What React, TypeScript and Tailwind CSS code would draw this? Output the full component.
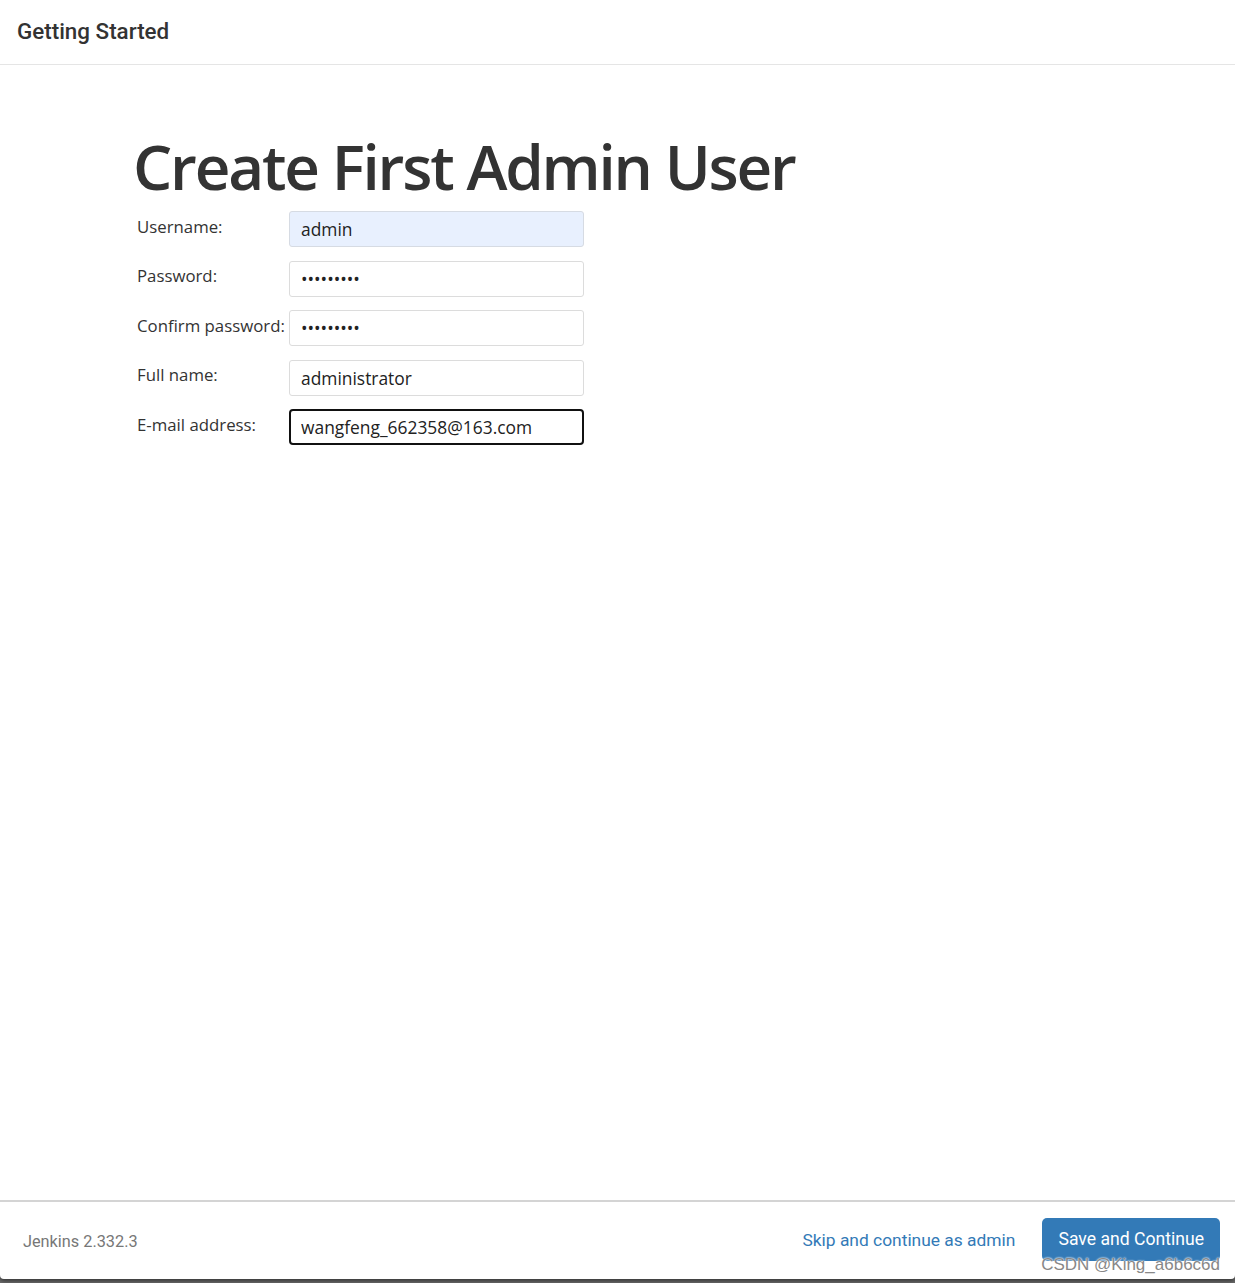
import { useState } from "react";

const fields = [
  { label: "Username:", name: "username", type: "text", value: "admin" },
  { label: "Password:", name: "password", type: "password", value: "123456789" },
  { label: "Confirm password:", name: "password2", type: "password", value: "123456789" },
  { label: "Full name:", name: "fullname", type: "text", value: "administrator" },
  { label: "E-mail address:", name: "email", type: "text", value: "wangfeng_662358@163.com" },
];

export default function App() {
  const [form, setForm] = useState<Record<string, string>>(
    Object.fromEntries(fields.map((f) => [f.name, f.value]))
  );

  return (
    <div className="w-[1235px] h-[1283px] bg-[#6b6b6b] overflow-hidden font-['Roboto',sans-serif]">
      <div className="h-[1279px] bg-white rounded-b-[4px] flex flex-col shadow-[0_2px_4px_rgba(0,0,0,0.5)]">
        {/* header */}
        <div className="h-[65px] border-b border-[#e5e5e5] px-[17px] flex items-center">
          <h4 className="text-[22.4px] font-medium text-[#333] leading-none pb-[1px]">Getting Started</h4>
        </div>

        {/* body */}
        <div className="flex-1 pl-[135px] pt-[70px] font-['Open_Sans',sans-serif]">
          <h1 className="text-[62px] font-semibold text-[#333] leading-[62px] tracking-[-2.2px] ml-[-2px]">
            Create First Admin User
          </h1>
          <form className="mt-[14px] flex flex-col gap-[13.5px]">
            {fields.map((f) => (
              <div key={f.name} className="flex items-center">
                <label
                  htmlFor={f.name}
                  className="w-[154px] pl-[2px] text-[16.8px] text-[#333] leading-none pb-[4px]"
                >
                  {f.label}
                </label>
                <input
                  id={f.name}
                  name={f.name}
                  type={f.type}
                  value={form[f.name]}
                  onChange={(e) => setForm((p) => ({ ...p, [f.name]: e.target.value }))}
                  className={
                    f.name === "username"
                      ? "w-[295px] h-[36px] px-[11px] text-[17.4px] text-[#222] bg-[#e8f0fe] border border-[#d6dbe3] rounded-[3px] outline-none"
                      : f.name === "email"
                        ? "w-[295px] h-[36px] px-[10px] text-[17.4px] text-[#222] bg-white border-2 border-[#111] rounded-[4px] outline-none"
                        : "w-[295px] h-[36px] px-[11px] text-[17.4px] text-[#222] bg-white border border-[#dcdcdc] rounded-[3px] outline-none"
                  }
                />
              </div>
            ))}
          </form>
        </div>

        {/* footer */}
        <div className="relative h-[79px] border-t-2 border-[#d4d4d4] flex items-center justify-between pl-[23px] pr-[15px]">
          <span className="text-[16.3px] text-[#777] pt-[3px]">Jenkins 2.332.3</span>
          <div className="flex items-center gap-[27px]">
            <a href="#" className="text-[17.4px] text-[#337ab7]">
              Skip and continue as admin
            </a>
            <button
              type="button"
              className="h-[43px] px-[16px] bg-[#337ab7] text-white text-[17.6px] rounded-[5px] mt-[-3px]"
            >
              Save and Continue
            </button>
          </div>
          <span className="absolute right-[15px] top-[50px] text-[17px] text-[#888] font-['Liberation_Sans',sans-serif] [text-shadow:0_0_2px_#fff,0_0_2px_#fff]">
            CSDN @King_a6b6c6d
          </span>
        </div>
      </div>
    </div>
  );
}
